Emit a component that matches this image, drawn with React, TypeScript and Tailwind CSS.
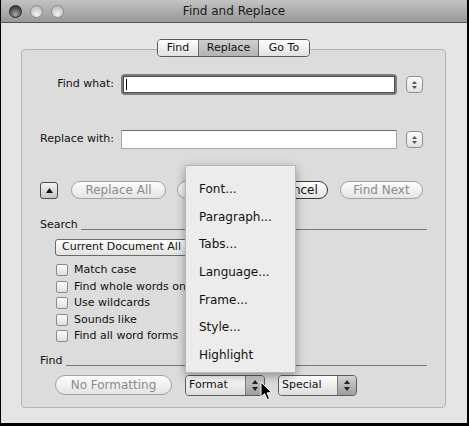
import React from "react";

function Light({ dark }: { dark?: boolean }) {
  return (
    <div
      className={`w-[13px] h-[13px] rounded-full border ${
        dark
          ? "border-[#2a2a2a] bg-[radial-gradient(circle_at_50%_75%,#a8a8a8,#4a4a4a_65%,#2e2e2e)]"
          : "border-[#8c8c8c] bg-[radial-gradient(circle_at_50%_75%,#f2f2f2,#c4c4c4_70%,#a8a8a8)]"
      }`}
    />
  );
}

function Stepper() {
  return (
    <div className="w-[17px] h-[17px] rounded-[4px] border border-[#8e8e8e] bg-linear-to-b from-[#fbfbfb] to-[#e2e2e2] flex flex-col items-center justify-center gap-[2px]">
      <svg width="5" height="3" viewBox="0 0 5 3"><path d="M2.5 0 L5 3 L0 3 Z" fill="#555" /></svg>
      <svg width="5" height="3" viewBox="0 0 5 3"><path d="M0 0 L5 0 L2.5 3 Z" fill="#555" /></svg>
    </div>
  );
}

function Pill({ label, w, dark }: { label: string; w: string; dark?: boolean }) {
  return (
    <div
      className={`${w} h-[18px] rounded-full border flex items-center justify-center text-[12px] bg-linear-to-b from-[#fdfdfd] to-[#e4e4e4] ${
        dark ? "border-[#3a3a3a] text-[#111]" : "border-[#a2a2a2] text-[#8a8a8a]"
      }`}
    >
      {label}
    </div>
  );
}

function Popup({ label, w }: { label: string; w: string }) {
  return (
    <div className={`${w} h-[21px] rounded-[4px] border border-[#5c5c5c] flex overflow-hidden`}>
      <div className="flex-1 bg-linear-to-b from-[#ffffff] to-[#dcdcdc] text-[11px] text-[#111] pl-[3px] flex items-center">
        {label}
      </div>
      <div className="w-[19px] border-l border-[#7a7a7a] bg-linear-to-b from-[#d4d4d4] to-[#9c9c9c] flex flex-col items-center justify-center gap-[3px]">
        <svg width="6" height="4" viewBox="0 0 6 4"><path d="M3 0 L6 4 L0 4 Z" fill="#222" /></svg>
        <svg width="6" height="4" viewBox="0 0 6 4"><path d="M0 0 L6 0 L3 4 Z" fill="#222" /></svg>
      </div>
    </div>
  );
}

function Check({ label }: { label: string }) {
  return (
    <div className="h-[16.5px] flex items-center gap-[6px] whitespace-nowrap">
      <div className="w-[12px] h-[12px] shrink-0 rounded-[2px] border border-[#8a8a8a] bg-linear-to-b from-[#ffffff] to-[#dedede]" />
      <span className="text-[11px] text-[#111]">{label}</span>
    </div>
  );
}

export default function App() {
  const menu = ["Font...", "Paragraph...", "Tabs...", "Language...", "Frame...", "Style...", "Highlight"];
  return (
    <div className="relative w-[469px] h-[426px] overflow-hidden border-l border-r-2 border-b-[3px] border-black bg-[#e5e5e5] font-['DejaVu_Sans','Liberation_Sans',sans-serif]">
      {/* title bar */}
      <div className="h-[23px] grid grid-cols-[1fr_auto_1fr] items-center bg-linear-to-b from-[#c2c2c2] to-[#999] border-b border-[#555]">
        <div className="flex items-center gap-[8px] pl-[8px]">
          <Light dark />
          <Light />
          <Light />
        </div>
        <div className="text-[12px] text-[#1a1a1a]">Find and Replace</div>
        <div />
      </div>

      <div className="pt-[16px] pl-[20px]">
        {/* tabs */}
        <div className="relative z-10 flex justify-center w-[425px]">
          <div className="flex h-[18px] rounded-[4px] border border-[#5a5a5a] overflow-hidden text-[11px] text-[#111]">
            <div className="w-[40px] flex items-center justify-center bg-linear-to-b from-white to-[#e0e0e0]">Find</div>
            <div className="w-[61px] flex items-center justify-center border-x border-[#6a6a6a] bg-linear-to-b from-[#cfcfcf] to-[#b3b3b3]">Replace</div>
            <div className="w-[50px] flex items-center justify-center bg-linear-to-b from-white to-[#e0e0e0]">Go To</div>
          </div>
        </div>

        {/* group box */}
        <div className="-mt-[8px] w-[425px] h-[359px] rounded-[4px] border border-[#b4b4b4] bg-[#dcdcdc] px-[18px] text-[11px] text-[#111]">
          <div className="mt-[24px] flex items-center">
            <div className="w-[81px] pr-[7px] text-right whitespace-nowrap">Find what:</div>
            <div className="w-[276px] h-[21px] rounded-[4px] bg-[#7c7c7c] p-[2px]">
              <div className="h-full bg-white border border-[#4c4c4c] flex items-center pl-[2px]">
                <div className="w-px h-[11px] bg-black" />
              </div>
            </div>
            <div className="ml-[9px]"><Stepper /></div>
          </div>

          <div className="mt-[35px] flex items-center">
            <div className="w-[81px] pr-[7px] text-right whitespace-nowrap">Replace with:</div>
            <div className="w-[276px] h-[19px] bg-white border border-[#a8a8a8] border-t-[#6e6e6e]" />
            <div className="ml-[9px]"><Stepper /></div>
          </div>

          {/* buttons */}
          <div className="mt-[32px] flex items-center">
            <div className="w-[18px] h-[17px] rounded-[3px] border border-[#4a4a4a] bg-linear-to-b from-[#f4f4f4] to-[#c6c6c6] flex items-center justify-center">
              <svg width="7" height="5" viewBox="0 0 7 5"><path d="M3.5 0 L7 5 L0 5 Z" fill="#111" /></svg>
            </div>
            <div className="ml-[13px]"><Pill label="Replace All" w="w-[95px]" /></div>
            {/* Replace button, hidden under the open menu */}
            <div className="ml-[11px]"><Pill label="" w="w-[79px]" /></div>
            <div className="ml-[11px]"><Pill label="Cancel" w="w-[61px]" dark /></div>
            <div className="ml-[12px]"><Pill label="Find Next" w="w-[83px]" /></div>
          </div>

          {/* search */}
          <div className="mt-[20px] flex items-end h-[12px]">
            <span className="leading-[12px]">Search</span>
            <div className="flex-1 ml-[3px] border-b border-[#777] mb-[1px]" />
          </div>
          <div className="mt-[8px] ml-[15px] w-[180px] h-[17px] rounded-[3px] border border-[#6a6a6a] bg-linear-to-b from-white to-[#e2e2e2] flex items-center pl-[6px] text-[11px] text-[#111] whitespace-nowrap overflow-hidden">
            Current Document All
          </div>
          <div className="mt-[6px] ml-[16px]">
            <Check label="Match case" />
            <Check label="Find whole words only" />
            <Check label="Use wildcards" />
            <Check label="Sounds like" />
            <Check label="Find all word forms" />
          </div>

          {/* find formatting */}
          <div className="mt-[10px] flex items-end h-[12px]">
            <span className="leading-[12px]">Find</span>
            <div className="flex-1 ml-[3px] border-b border-[#777] mb-[1px]" />
          </div>
          <div className="mt-[8px] ml-[15px] flex items-center">
            <div className="w-[117px] h-[20px] rounded-full border border-[#a2a2a2] bg-linear-to-b from-[#fdfdfd] to-[#e4e4e4] flex items-center justify-center text-[12px] text-[#8a8a8a]">
              No Formatting
            </div>
            <div className="ml-[13px]"><Popup label="Format" w="w-[80px]" /></div>
            <div className="ml-[13px]"><Popup label="Special" w="w-[79px]" /></div>
          </div>
        </div>
      </div>

      {/* open popup menu */}
      <div className="absolute left-[184px] top-[165px] w-[111px] h-[208px] bg-[#ececec] border border-[#b8b8b8] shadow-[0_3px_9px_rgba(0,0,0,0.35)] pt-[9px]">
        {menu.map((m) => (
          <div key={m} className="h-[27.7px] flex items-center pl-[13px] text-[12px] text-[#111]">
            {m}
          </div>
        ))}
      </div>

      {/* mouse pointer */}
      <svg className="absolute left-[259px] top-[381px]" width="14" height="20" viewBox="0 0 14 20">
        <path d="M1 1 L1 16 L4.6 12.6 L7.2 18.6 L9.6 17.6 L7 11.8 L11.8 11.8 Z" fill="#000" stroke="#fff" strokeWidth="1" strokeLinejoin="round" />
      </svg>
    </div>
  );
}
